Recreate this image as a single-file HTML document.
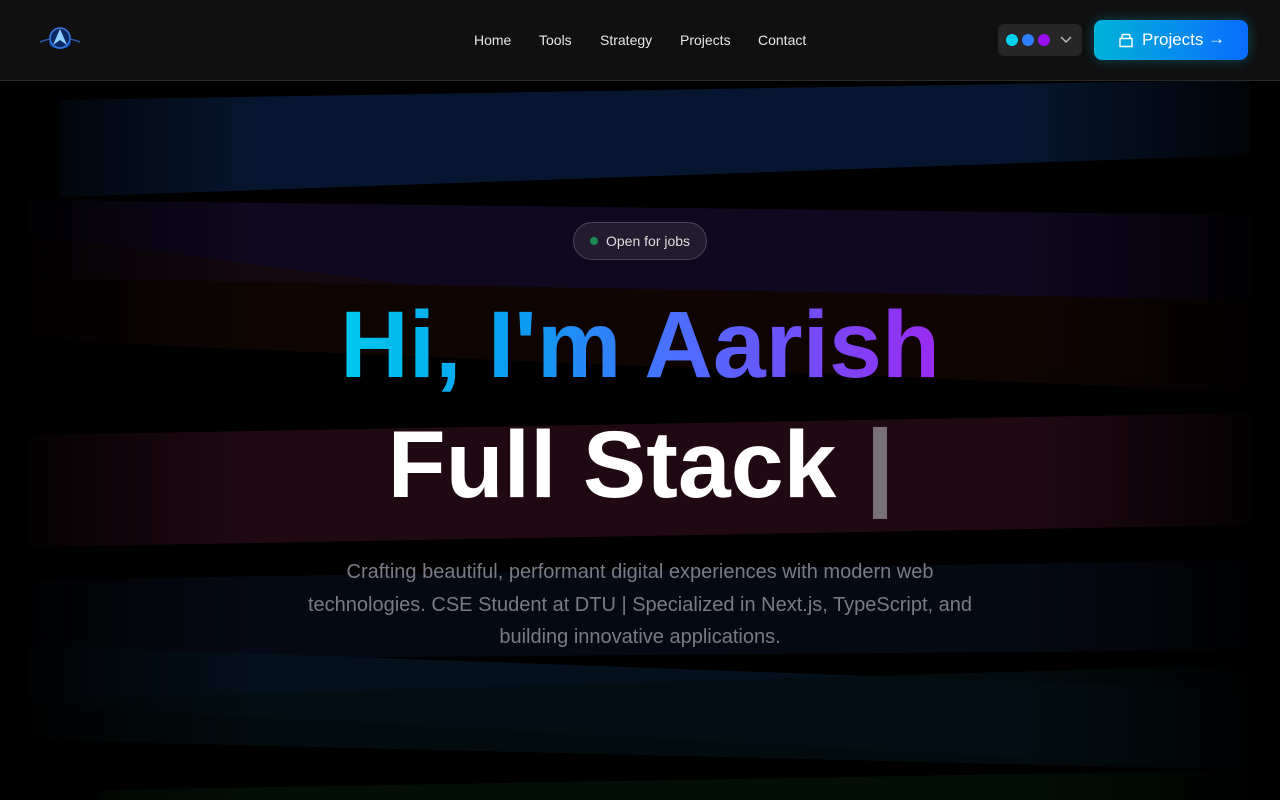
<!DOCTYPE html>
<html><head><meta charset="utf-8"><style>
*{margin:0;padding:0;box-sizing:border-box}
body{width:1280px;height:800px;overflow:hidden;background:#000;font-family:"Liberation Sans",sans-serif;position:relative}
nav{position:absolute;left:0;top:0;width:1280px;height:81px;background:#101010;border-bottom:1px solid #2a2a2a;z-index:5}
.links span{position:absolute;top:32px;font-size:14px;color:#e6e6e6}
.theme{position:absolute;left:998px;top:24px;width:84px;height:32px;background:#262626;border-radius:6px}
.dot{position:absolute;top:10px;width:12px;height:12px;border-radius:50%}
.btn{position:absolute;left:1094px;top:20px;width:154px;height:40px;border-radius:8px;background:linear-gradient(90deg,#00b4d8,#0a6cff);box-shadow:0 0 12px rgba(0,180,220,.35);color:#fff;font-size:17px}
svg.bg{position:absolute;left:0;top:0}
.badge{position:absolute;left:573px;top:222px;width:134px;height:38px;border-radius:19px;border:1px solid #4a4458;background:rgba(40,34,52,.8);color:#ddd;font-size:14px}
h1{position:absolute;left:0;width:1280px;text-align:center;font-weight:bold;font-size:95px;white-space:nowrap}
p{position:absolute;left:290px;top:556px;width:700px;text-align:center;color:#7a7a86;font-size:20px;line-height:32.5px}
</style></head><body>
<svg class="bg" width="1280" height="800">
<defs>
<linearGradient id="f" x1="0" x2="1"><stop offset="0" stop-color="#000" stop-opacity="1"/><stop offset=".2" stop-color="#000" stop-opacity="0"/><stop offset=".8" stop-color="#000" stop-opacity="0"/><stop offset="1" stop-color="#000" stop-opacity="1"/></linearGradient>
</defs>
<polygon points="60,100 1250,80 1250,155 60,197" fill="#061630"/>
<polygon points="30,200 1250,215 1250,300 30,278" fill="#100820"/>
<polygon points="30,235 1250,395 1250,300 30,278" fill="#140810"/>
<polygon points="30,278 1250,300 1250,392 30,340" fill="#100602" opacity=".9"/>
<polygon points="30,435 1250,413 1250,525 30,547" fill="#210914"/>
<polygon points="30,580 1250,560 1250,650 30,660" fill="#050914"/>
<polygon points="30,645 1250,690 1250,770 30,705" fill="#04101c"/>
<polygon points="30,700 1250,665 1250,770 30,740" fill="#020e12" opacity=".8"/>
<polygon points="100,790 1250,770 1250,800 100,800" fill="#020e06"/>
<rect width="1280" height="800" fill="url(#f)"/>
</svg>
<nav>
<svg style="position:absolute;left:38px;top:24px" width="44" height="32" viewBox="0 0 44 32">
<ellipse cx="22" cy="19" rx="11" ry="6" fill="#0a3a9a"/>
<path d="M2 18 Q22 10 42 18" stroke="#2a5ab0" stroke-width="1.5" fill="none"/>
<circle cx="22" cy="14" r="10" fill="#0c2a6a" stroke="#3a7ae0" stroke-width="1.5"/>
<path d="M22 5 L15 21 L22 16 L29 21 Z" fill="#8fd0ff"/>
</svg>
<div class="links"><span style="left:474px">Home</span><span style="left:539px">Tools</span><span style="left:600px">Strategy</span><span style="left:680px">Projects</span><span style="left:758px">Contact</span></div>
<div class="theme"><div class="dot" style="left:8px;background:#00d2ee"></div><div class="dot" style="left:24px;background:#2f80ff"></div><div class="dot" style="left:40px;background:#9b10f0"></div>
<svg style="position:absolute;left:62px;top:12px" width="12" height="8"><path d="M1 1 L6 6 L11 1" stroke="#bbb" stroke-width="1.5" fill="none"/></svg></div>
<div class="btn"><svg style="position:absolute;left:24px;top:13px" width="16" height="15"><path d="M4 5 V3 Q4 1.5 5.5 1.5 H10.5 Q12 1.5 12 3 V5 M2 5.5 H14 V13.5 H2 Z" stroke="#fff" stroke-width="1.4" fill="none"/></svg><span style="position:absolute;left:48px;top:10px">Projects</span><span style="position:absolute;left:114px;top:9px">→</span></div>
</nav>
<div class="badge"><span style="position:absolute;left:16px;top:14px;width:8px;height:8px;border-radius:50%;background:#1f8a55"></span><span style="position:absolute;left:32px;top:10px">Open for jobs</span></div>
<h1 style="top:291px"><span style="background:linear-gradient(90deg,#00c8ee 0%,#0a9cf0 30%,#4a70ff 55%,#9a2af0 100%);-webkit-background-clip:text;background-clip:text;color:transparent">Hi, I'm Aarish</span></h1>
<h1 style="top:411px;color:#fff;left:-28px">Full Stack</h1>
<div style="position:absolute;left:873px;top:427px;width:14px;height:92px;background:#777077"></div>
<p>Crafting beautiful, performant digital experiences with modern web technologies. CSE Student at DTU | Specialized in Next.js, TypeScript, and building innovative applications.</p>
</body></html>
